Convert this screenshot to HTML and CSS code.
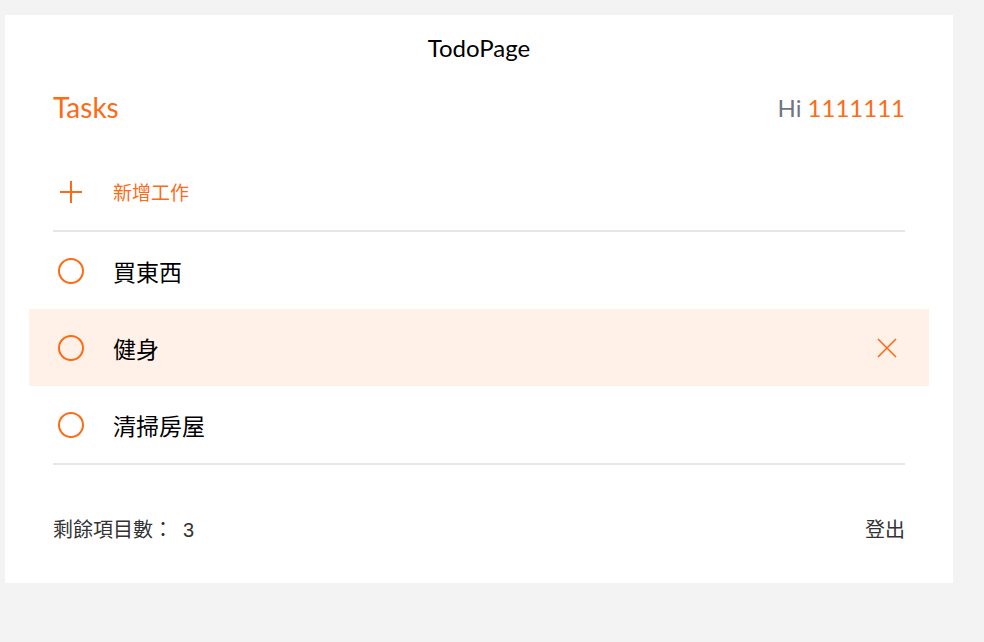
FILE: index.html
```html
<!DOCTYPE html>
<html lang="zh-Hant">
<head>
<meta charset="utf-8">
<title>TodoPage</title>
<link rel="stylesheet" href="styles.css">
</head>
<body>
<div class="card">
  <h1 class="title">TodoPage</h1>
  <div class="header">
    <h2 class="tasks">Tasks</h2>
    <div class="hi">Hi <span class="user">1111111</span></div>
  </div>
  <div class="add">
    <svg class="plus" width="24" height="24" viewBox="0 0 24 24"><path d="M12 1V23M1 12H23" stroke="#ff6a14" stroke-width="2" fill="none"/></svg>
    <span class="add-text">新增工作</span>
  </div>
  <ul class="list">
    <li class="item"><span class="circle"></span><span class="label">買東西</span></li>
    <li class="item hover"><span class="circle"></span><span class="label">健身</span>
      <svg class="del" width="20" height="20" viewBox="0 0 20 20"><path d="M1 1L19 19M19 1L1 19" stroke="#ff6a14" stroke-width="1.6" fill="none"/></svg>
    </li>
    <li class="item"><span class="circle"></span><span class="label">清掃房屋</span></li>
  </ul>
  <div class="footer">
    <span>剩餘項目數：<span class="count">3</span></span>
    <span>登出</span>
  </div>
</div>
</body>
</html>
```
FILE: styles.css
```css
html, body {
  margin: 0;
  padding: 0;
}
body {
  background: #f3f3f3;
  font-family: Lato, "Noto Sans CJK TC", sans-serif;
  color: #000;
  padding: 15px 31px 0 5px;
  height: 642px;
  box-sizing: border-box;
}
.card {
  background: #fff;
  width: 948px;
  height: 568px;
  box-sizing: border-box;
  padding: 0 48px;
}
.title {
  margin: 0;
  font-weight: 400;
  font-size: 24px;
  text-align: center;
  line-height: 30px;
  padding-top: 18px;
  height: 48px;
}
.header {
  display: flex;
  justify-content: space-between;
  align-items: center;
  height: 52px;
}
.tasks {
  margin: 0;
  font-weight: 400;
  font-size: 28px;
  color: #ff6a14;
}
.hi {
  font-size: 24px;
  color: #6f7680;
}
.user {
  color: #ff6a14;
}
.add {
  display: flex;
  align-items: center;
  height: 77px;
  padding-top: 20px;
  border-bottom: 2px solid #e6e6e6;
}
.plus {
  margin-left: 6px;
}
.add-text {
  margin-left: 30px;
  font-family: "Noto Sans CJK TC", sans-serif;
  font-size: 19px;
  color: #ff6a14;
}
.list {
  list-style: none;
  margin: 0;
  padding: 0;
  border-bottom: 2px solid #e6e6e6;
}
.item {
  display: flex;
  align-items: center;
  height: 77px;
  margin: 0 -24px;
  padding: 0 24px;
}
.item.hover {
  background: #fff1e8;
}
.circle {
  width: 22px;
  height: 22px;
  border: 2px solid #ff6a14;
  border-radius: 50%;
  margin-left: 5px;
  flex: none;
}
.label {
  margin-left: 29px;
  font-family: "Noto Sans CJK TC", sans-serif;
  font-size: 23px;
  color: #000;
}
.del {
  margin-left: auto;
  margin-right: 8px;
}
.footer {
  display: flex;
  justify-content: space-between;
  align-items: center;
  height: 118px;
  box-sizing: border-box;
  padding-top: 8px;
  font-family: "Noto Sans CJK TC", sans-serif;
  font-size: 20px;
  color: #333;
}
.count {
  margin-left: 10px;
  font-family: "Liberation Sans", sans-serif;
}
```
